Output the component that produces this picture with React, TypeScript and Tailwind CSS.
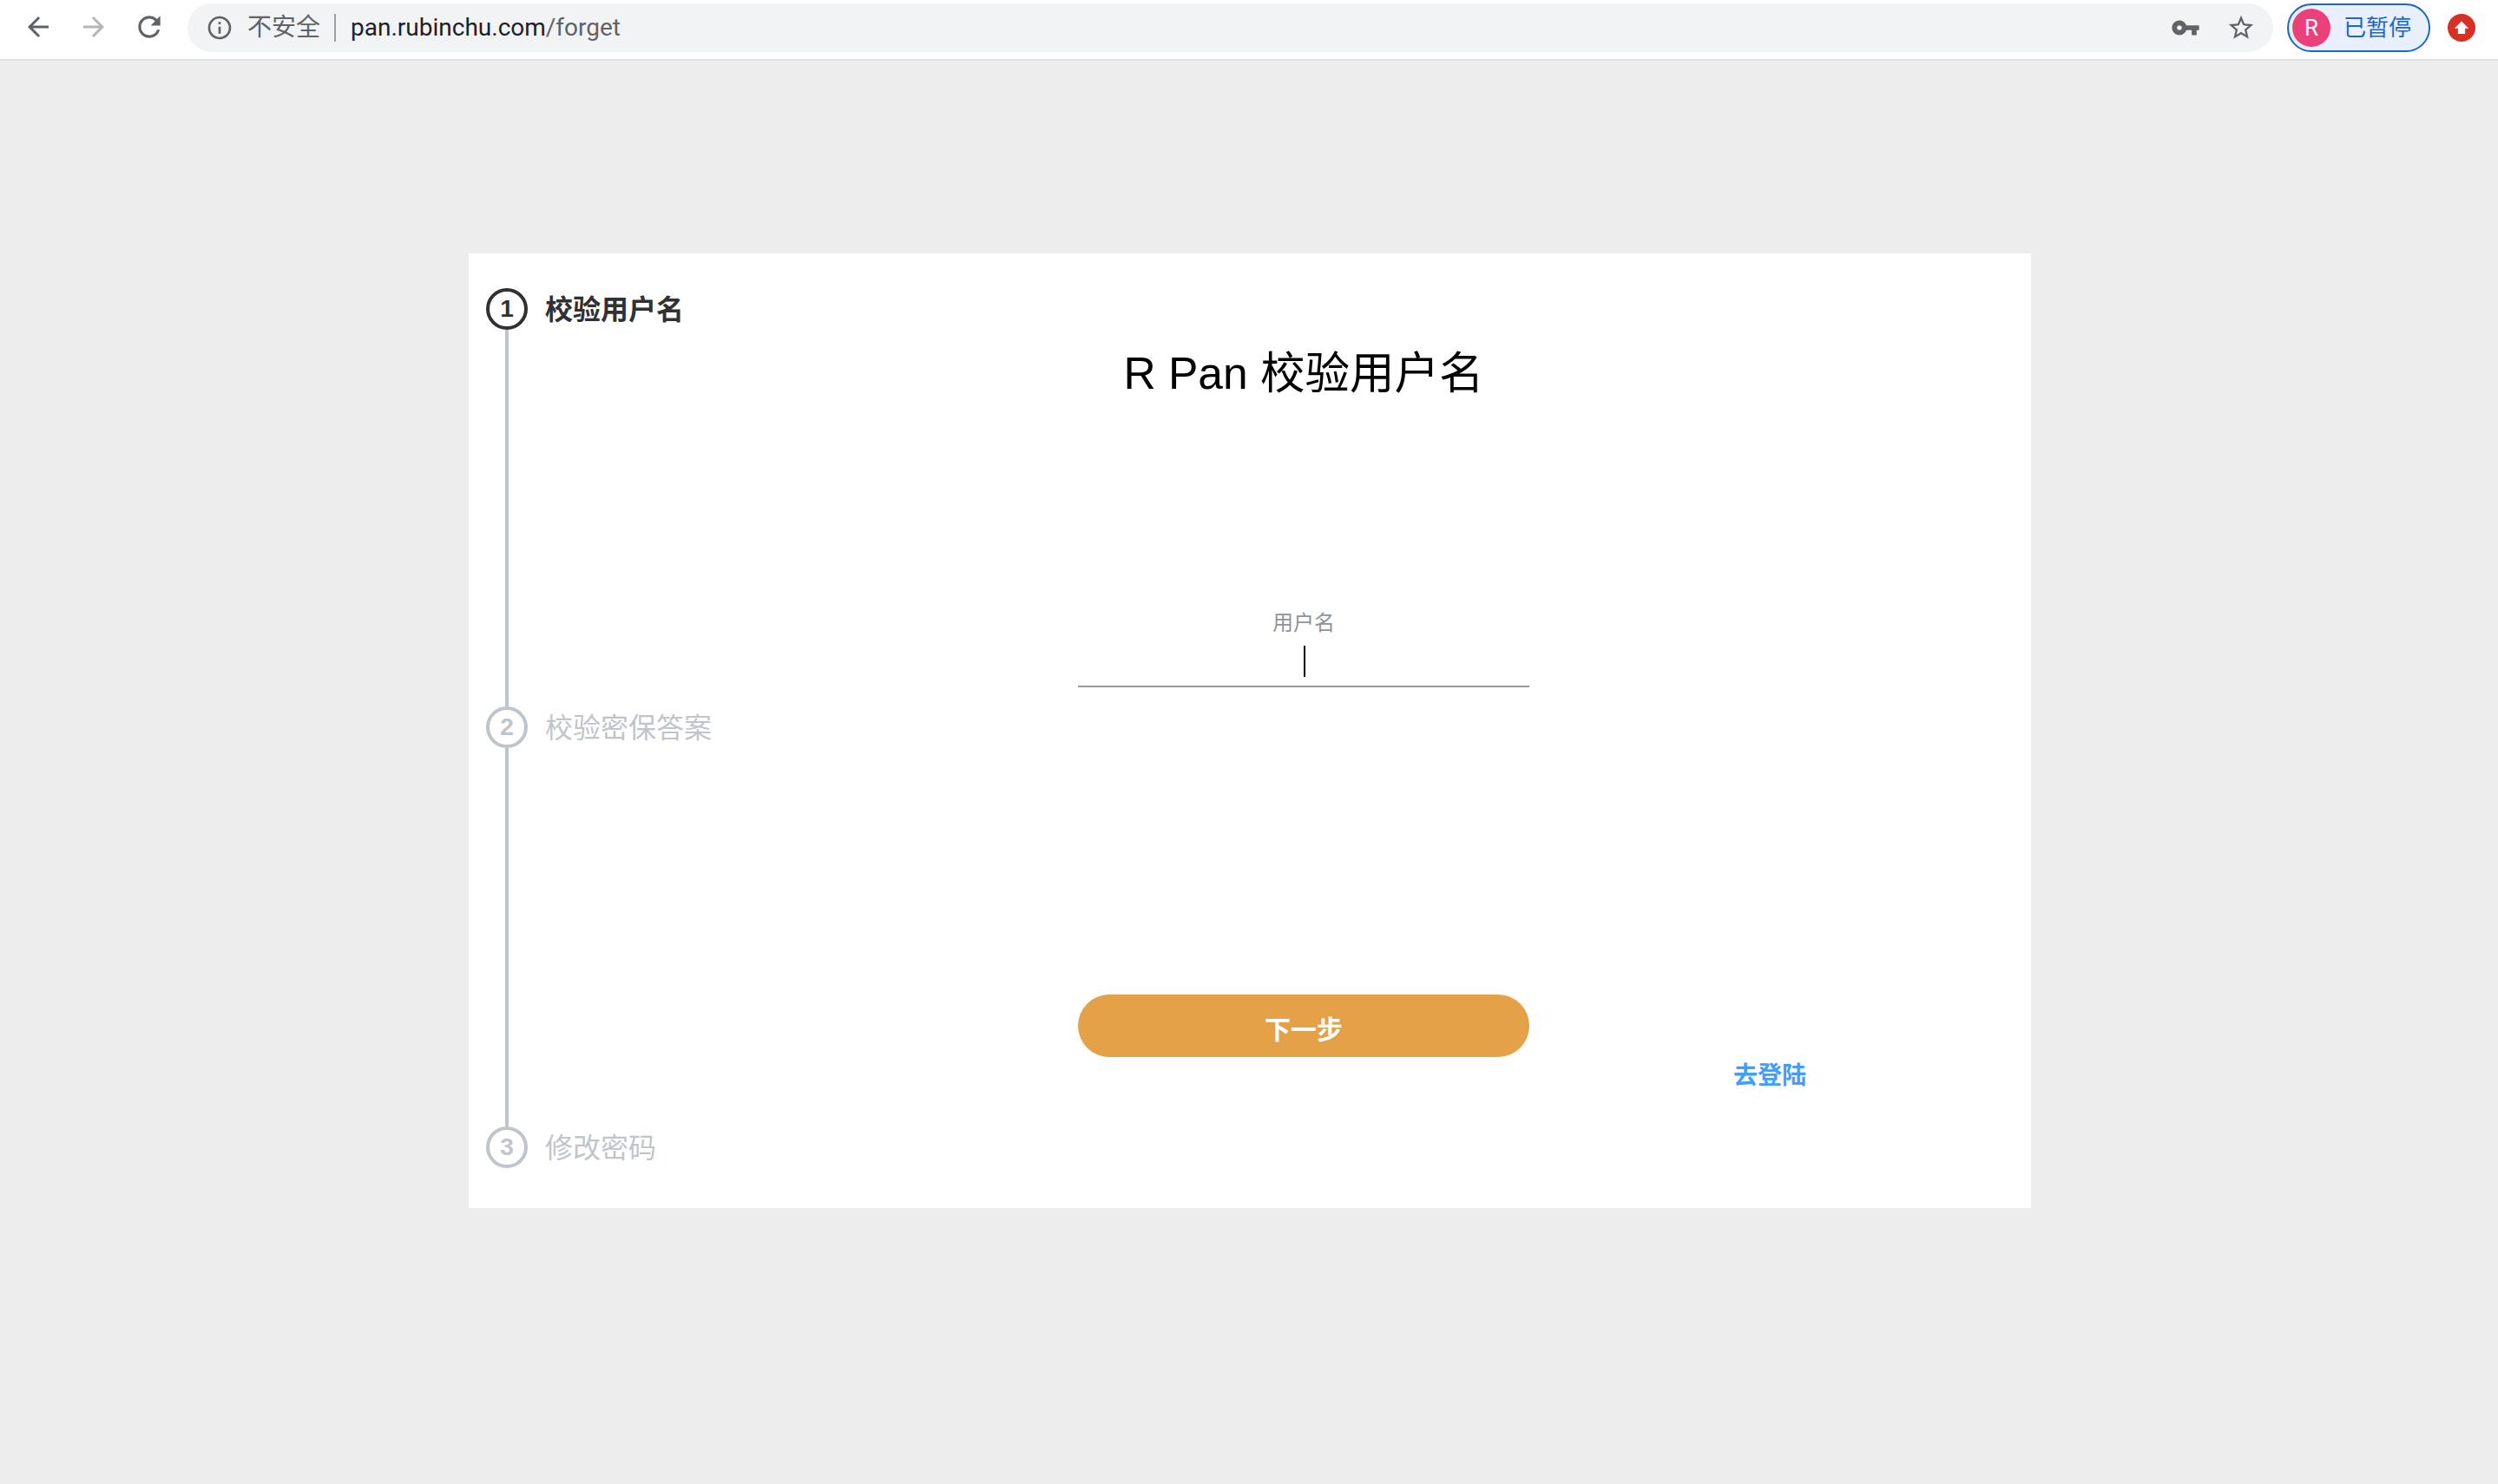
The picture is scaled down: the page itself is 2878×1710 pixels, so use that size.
import React from 'react';

const BrowserBar: React.FC = () => (
    <div className="h-[70px] bg-white border-b-2 border-[#dfe1e4] flex items-start shrink-0">
        <svg viewBox="0 0 24 24" className="w-[36px] h-[36px] ml-[26px] mt-[13px] fill-[#5f6368]">
            <path d="M20 11H7.83l5.59-5.59L12 4l-8 8 8 8 1.41-1.41L7.83 13H20v-2z" />
        </svg>
        <svg viewBox="0 0 24 24" className="w-[36px] h-[36px] ml-[28px] mt-[13px] fill-[#b4b6b9]">
            <path d="M12 4l-1.41 1.41L16.17 11H4v2h12.17l-5.58 5.59L12 20l8-8z" />
        </svg>
        <svg viewBox="0 0 24 24" className="w-[38px] h-[38px] ml-[27px] mt-[12px] fill-[#5f6368]">
            <path d="M17.65 6.35C16.2 4.9 14.21 4 12 4c-4.42 0-7.99 3.58-7.99 8s3.57 8 7.99 8c3.73 0 6.84-2.55 7.73-6h-2.08c-.82 2.33-3.04 4-5.65 4-3.31 0-6-2.69-6-6s2.69-6 6-6c1.66 0 3.14.69 4.22 1.78L13 11h7V4l-2.35 2.35z" />
        </svg>

        <div className="ml-[25px] mt-1 w-[2403px] h-[56px] rounded-full bg-[#f1f3f4] flex items-center">
            <svg viewBox="0 0 24 24" className="w-[32px] h-[32px] ml-[21px] fill-[#5f6368]">
                <path d="M11 7h2v2h-2zm0 4h2v6h-2zm1-9C6.48 2 2 6.48 2 12s4.48 10 10 10 10-4.48 10-10S17.52 2 12 2zm0 18c-4.41 0-8-3.59-8-8s3.59-8 8-8 8 3.59 8 8-3.59 8-8 8z" />
            </svg>
            <span className="ml-[16px] text-[28px] leading-[32px] text-[#5f6368]">不安全</span>
            <span className="ml-[16px] w-[2px] h-[32px] bg-[#9aa0a6]" />
            <span className="ml-[17px] text-[28px] leading-[32px] text-[#202124] font-['Roboto','Noto_Sans_CJK_SC',sans-serif]">
                pan.rubinchu.com<span className="text-[#5f6368]">/forget</span>
            </span>
            <svg viewBox="0 0 24 24" className="w-[34px] h-[34px] ml-auto fill-[#5f6368]">
                <path d="M12.65 10C11.83 7.67 9.61 6 7 6c-3.31 0-6 2.69-6 6s2.69 6 6 6c2.61 0 4.83-1.67 5.65-4H17v4h4v-4h2v-4H12.65zM7 14c-1.1 0-2-.9-2-2s.9-2 2-2 2 .9 2 2-.9 2-2 2z" />
            </svg>
            <svg viewBox="0 0 24 24" className="w-[34px] h-[34px] ml-[30px] mr-[20px] fill-[#5f6368]">
                <path d="M22 9.24l-7.19-.62L12 2 9.19 8.63 2 9.24l5.46 4.73L5.82 21 12 17.27 18.18 21l-1.63-7.03L22 9.24zM12 15.4l-3.76 2.27 1-4.28-3.32-2.88 4.38-.38L12 6.1l1.71 4.04 4.38.38-3.32 2.88 1 4.28L12 15.4z" />
            </svg>
        </div>

        <div className="ml-4 mt-1 w-[165px] h-[56px] rounded-full border-2 border-[#1a66c9] bg-[#e8f0fe] flex items-center pl-1">
            <div className="w-[44px] h-[44px] rounded-full bg-[#ec407a] text-white text-[26px] flex items-center justify-center font-['Roboto',sans-serif]">R</div>
            <span className="ml-[15px] text-[26px] leading-[32px] text-[#1a66c9] whitespace-nowrap">已暂停</span>
        </div>

        <div className="ml-5 mt-4 w-8 h-8 rounded-full bg-[#d93025] flex items-center justify-center">
            <svg viewBox="0 0 16 16" className="w-[22px] h-[22px] fill-white">
                <path d="M8 2.5 14 8.5H11V13H5V8.5H2Z" />
            </svg>
        </div>
    </div>
);

const StepCircle: React.FC<{ n: number; label: string; active?: boolean }> = ({ n, label, active }) => (
    <div className="h-12 flex items-center">
        <div
            className={
                active
                    ? 'w-12 h-12 rounded-full border-4 border-[#303133] text-[#303133] font-bold text-[28px] flex items-center justify-center'
                    : 'w-12 h-12 rounded-full border-4 border-[#c0c4cc] text-[#c0c4cc] font-bold text-[28px] flex items-center justify-center'
            }
        >
            {n}
        </div>
        <span
            className={
                active
                    ? 'ml-5 mt-[2px] text-[32px] leading-[48px] font-bold text-[#303133] whitespace-nowrap'
                    : 'ml-5 mt-[2px] text-[32px] leading-[48px] text-[#c0c4cc] whitespace-nowrap'
            }
        >
            {label}
        </span>
    </div>
);

const App: React.FC = () => {
    return (
        <div className="min-h-screen bg-[#ededed] flex flex-col font-['Liberation_Sans','Noto_Sans_CJK_SC',sans-serif]">
            <BrowserBar />

            <div className="mt-[222px] ml-[540px] w-[1800px] h-[1100px] bg-white flex">
                <div className="w-[702px] shrink-0 pl-5 pt-10 flex flex-col">
                    <StepCircle n={1} label="校验用户名" active />
                    <div className="ml-[22px] w-1 h-[434px] bg-[#c0c4cc]" />
                    <StepCircle n={2} label="校验密保答案" />
                    <div className="ml-[22px] w-1 h-[436px] bg-[#c0c4cc]" />
                    <StepCircle n={3} label="修改密码" />
                </div>

                <div className="w-[839px] pt-[108px] flex flex-col">
                    <div className="w-[520px] flex flex-col">
                        <h1 className="text-[51.5px] leading-[60px] text-black text-center whitespace-nowrap">R Pan 校验用户名</h1>
                        <label className="mt-[242px] text-[24px] leading-[32px] text-[#909399] text-center">用户名</label>
                        <div className="h-[58px] border-b-2 border-[#999999] flex justify-center pt-[10px] pl-[2px]">
                            <span className="w-[2px] h-9 bg-black" />
                        </div>
                        <button className="mt-[354px] h-[72px] pt-[8px] rounded-full bg-[#e4a147] text-white text-[30px] font-bold">下一步</button>
                    </div>
                    <a className="self-end mt-[6px] text-[28px] leading-[32px] font-bold text-[#409eff] whitespace-nowrap">去登陆</a>
                </div>
            </div>
        </div>
    );
};

export default App;
